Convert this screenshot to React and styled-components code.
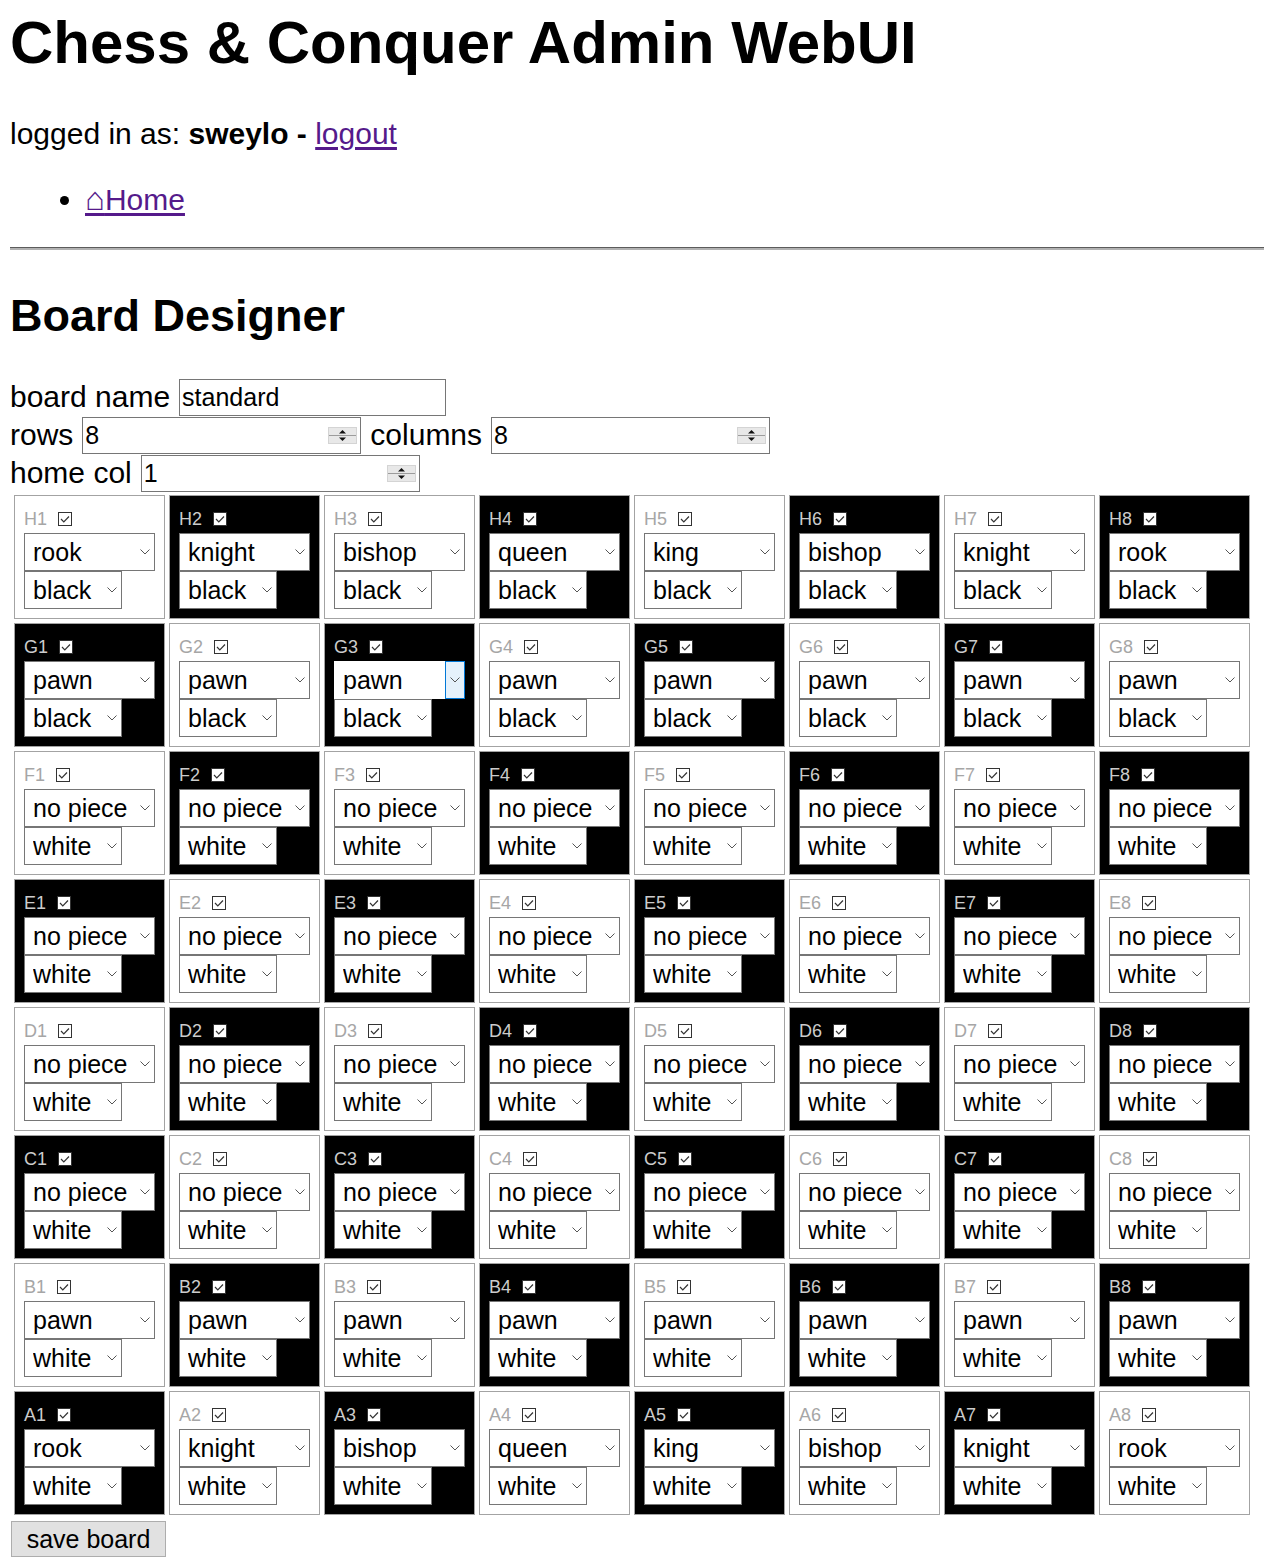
import React from 'react';
import styled, { createGlobalStyle } from 'styled-components';

const GlobalStyle = createGlobalStyle`
  html, body { margin: 0; padding: 0; background: #ffffff; }
  body {
    font-family: "Liberation Sans", Arial, sans-serif;
    font-size: 30px;
    color: #000000;
  }
`;

const Page = styled.div`
  padding: 0 8px 20px 10px;
`;

const Title = styled.h1`
  font-size: 60px;
  font-weight: bold;
  line-height: normal;
  margin: 8px 0 40px 0;
`;

const Info = styled.p`
  margin: 0 0 31px 0;
  line-height: normal;
`;

const Strong = styled.strong`
  font-weight: bold;
`;

const Link = styled.a`
  color: #551a8b;
  text-decoration: underline;
  text-underline-offset: 3px;
  cursor: pointer;
`;

const NavList = styled.ul`
  margin: 0 0 30px 0;
  padding-left: 75px;
  list-style: disc;
  line-height: normal;
`;

const House = styled.span`
  font-family: "DejaVu Sans", sans-serif;
  font-size: 33px;
  font-weight: 300;
  line-height: 1;
`;

const Rule = styled.hr`
  height: 0;
  margin: 0 -8px 0 0;
  border: none;
  border-top: 1px solid #5c5c5c;
  border-bottom: 2px solid #b2b2b2;
`;

const Subtitle = styled.h2`
  font-size: 45px;
  font-weight: bold;
  line-height: normal;
  margin: 40px 0 36px 0;
`;

const Form = styled.form`
  margin: 0;
`;

const FieldRow = styled.div`
  display: flex;
  align-items: center;
  gap: 9px;
  height: 38px;
  line-height: normal;
`;

const FieldLabel = styled.label`
  font-size: 30px;
  white-space: nowrap;
`;

const TextInput = styled.input`
  box-sizing: border-box;
  width: ${p => p.$w}px;
  height: 37px;
  border: 1px solid #767676;
  border-radius: 0;
  padding: 0 2px;
  font-family: "Liberation Sans", Arial, sans-serif;
  font-size: 25px;
  color: #000;
  background: #fff;
  outline: none;
`;

const NumberWrap = styled.div`
  position: relative;
  width: ${p => p.$w}px;
  height: 37px;
`;

const NumberInput = styled.input`
  box-sizing: border-box;
  width: 100%;
  height: 100%;
  border: 1px solid #767676;
  border-radius: 0;
  padding: 0 36px 0 2px;
  font-family: "Liberation Sans", Arial, sans-serif;
  font-size: 25px;
  color: #000;
  background: #fff;
  outline: none;
  -moz-appearance: textfield;
  &::-webkit-inner-spin-button,
  &::-webkit-outer-spin-button {
    -webkit-appearance: none;
    margin: 0;
  }
`;

const Spinner = styled.svg`
  position: absolute;
  right: 4px;
  top: 10px;
  pointer-events: none;
`;

const Board = styled.div`
  display: grid;
  grid-template-columns: repeat(8, 151px);
  grid-auto-rows: 124px;
  gap: 4px;
  margin: 3px 0 0 4px;
`;

const Cell = styled.div`
  box-sizing: border-box;
  border: 1px solid #a3a3a3;
  background: ${p => (p.$dark ? '#000000' : '#ffffff')};
  padding: 9px;
  display: flex;
  flex-direction: column;
`;

const CellHead = styled.div`
  display: flex;
  align-items: center;
  height: 28px;
`;

const CellName = styled.span`
  font-size: 18px;
  line-height: 18px;
  color: ${p => (p.$dark ? '#cccccc' : '#a6a6a6')};
`;

const CheckBox = styled.span`
  display: inline-flex;
  margin-left: 11px;
  width: 14px;
  height: 14px;
`;

const SelectWrap = styled.div`
  position: relative;
  width: ${p => p.$w}px;
  height: 38px;
`;

const Select = styled.select`
  box-sizing: border-box;
  display: block;
  width: 100%;
  height: 100%;
  margin: 0;
  appearance: none;
  -webkit-appearance: none;
  border: 1px solid ${p => (p.$hover ? '#ffffff' : '#767676')};
  border-radius: 0;
  background: #ffffff;
  padding: 0 20px 0 8px;
  font-family: "Liberation Sans", Arial, sans-serif;
  font-size: 25px;
  line-height: 36px;
  color: #000000;
  outline: none;
`;

const ArrowBox = styled.span`
  position: absolute;
  top: 0;
  right: 0;
  bottom: 0;
  width: 20px;
  box-sizing: border-box;
  display: flex;
  align-items: center;
  justify-content: center;
  pointer-events: none;
  border: 1px solid ${p => (p.$hover ? '#0078d7' : 'transparent')};
  background: ${p => (p.$hover ? '#e5f1fb' : 'transparent')};
`;

const SaveButton = styled.button`
  box-sizing: border-box;
  margin: 6px 0 0 1px;
  width: 155px;
  height: 36px;
  background: #e1e1e1;
  border: 1px solid #adadad;
  border-radius: 0;
  font-family: "Liberation Sans", Arial, sans-serif;
  font-size: 25px;
  color: #000;
  padding: 0;
`;

const Chevron = () => (
  <svg width="10" height="6" viewBox="0 0 10 6">
    <polyline points="0.5,0.5 5,5 9.5,0.5" fill="none" stroke="#555" strokeWidth="1" />
  </svg>
);

const Check = () => (
  <svg width="14" height="14" viewBox="0 0 14 14">
    <rect x="0.5" y="0.5" width="13" height="13" fill="#fff" stroke="#333" strokeWidth="1" />
    <polyline points="3,7 5.8,9.8 11,4.5" fill="none" stroke="#333" strokeWidth="1.2" />
  </svg>
);

const SpinIcon = () => (
  <Spinner width="29" height="17" viewBox="0 0 29 17">
    <rect x="0.5" y="0.5" width="28" height="16" fill="#e8e8e8" stroke="#d4d4d4" />
    <line x1="1" y1="8.5" x2="28" y2="8.5" stroke="#9c9c9c" strokeWidth="1" />
    <polygon points="11,6.5 18,6.5 14.5,3" fill="#111" />
    <polygon points="11,10.5 18,10.5 14.5,14" fill="#111" />
  </Spinner>
);

const PIECES = ['no piece', 'pawn', 'knight', 'bishop', 'rook', 'queen', 'king'];
const COLORS = ['white', 'black'];
const ROWS = ['H', 'G', 'F', 'E', 'D', 'C', 'B', 'A'];
const BACK = ['rook', 'knight', 'bishop', 'queen', 'king', 'bishop', 'knight', 'rook'];

const pieceFor = (r, c) => {
  if (r === 0 || r === 7) return BACK[c];
  if (r === 1 || r === 6) return 'pawn';
  return 'no piece';
};

const Dropdown = ({ width, options, value, hover }) => (
  <SelectWrap $w={width}>
    <Select $hover={hover} defaultValue={value}>
      {options.map(o => (
        <option key={o} value={o}>{o}</option>
      ))}
    </Select>
    <ArrowBox $hover={hover}>
      <Chevron />
    </ArrowBox>
  </SelectWrap>
);

const Square = ({ r, c }) => {
  const dark = (r + c) % 2 === 1;
  const name = `${ROWS[r]}${c + 1}`;
  return (
    <Cell $dark={dark}>
      <CellHead>
        <CellName $dark={dark}>{name}</CellName>
        <CheckBox><Check /></CheckBox>
      </CellHead>
      <Dropdown width={131} options={PIECES} value={pieceFor(r, c)} hover={r === 1 && c === 2} />
      <Dropdown width={98} options={COLORS} value={r <= 1 ? 'black' : 'white'} />
    </Cell>
  );
};

const NumberField = ({ width, value }) => (
  <NumberWrap $w={width}>
    <NumberInput type="number" defaultValue={value} />
    <SpinIcon />
  </NumberWrap>
);

export default function App() {
  const cells = [];
  for (let r = 0; r < 8; r++) {
    for (let c = 0; c < 8; c++) {
      cells.push(<Square key={`${r}-${c}`} r={r} c={c} />);
    }
  }
  return (
    <>
      <GlobalStyle />
      <Page>
        <Title>Chess &amp; Conquer Admin WebUI</Title>
        <Info>
          logged in as: <Strong>sweylo -</Strong> <Link>logout</Link>
        </Info>
        <NavList>
          <li>
            <Link><House>⌂</House>Home</Link>
          </li>
        </NavList>
        <Rule />
        <Subtitle>Board Designer</Subtitle>
        <Form onSubmit={e => e.preventDefault()}>
          <FieldRow>
            <FieldLabel>board name</FieldLabel>
            <TextInput $w={267} type="text" defaultValue="standard" />
          </FieldRow>
          <FieldRow>
            <FieldLabel>rows</FieldLabel>
            <NumberField width={279} value={8} />
            <FieldLabel>columns</FieldLabel>
            <NumberField width={279} value={8} />
          </FieldRow>
          <FieldRow>
            <FieldLabel>home col</FieldLabel>
            <NumberField width={279} value={1} />
          </FieldRow>
          <Board>{cells}</Board>
          <SaveButton type="submit">save board</SaveButton>
        </Form>
      </Page>
    </>
  );
}
